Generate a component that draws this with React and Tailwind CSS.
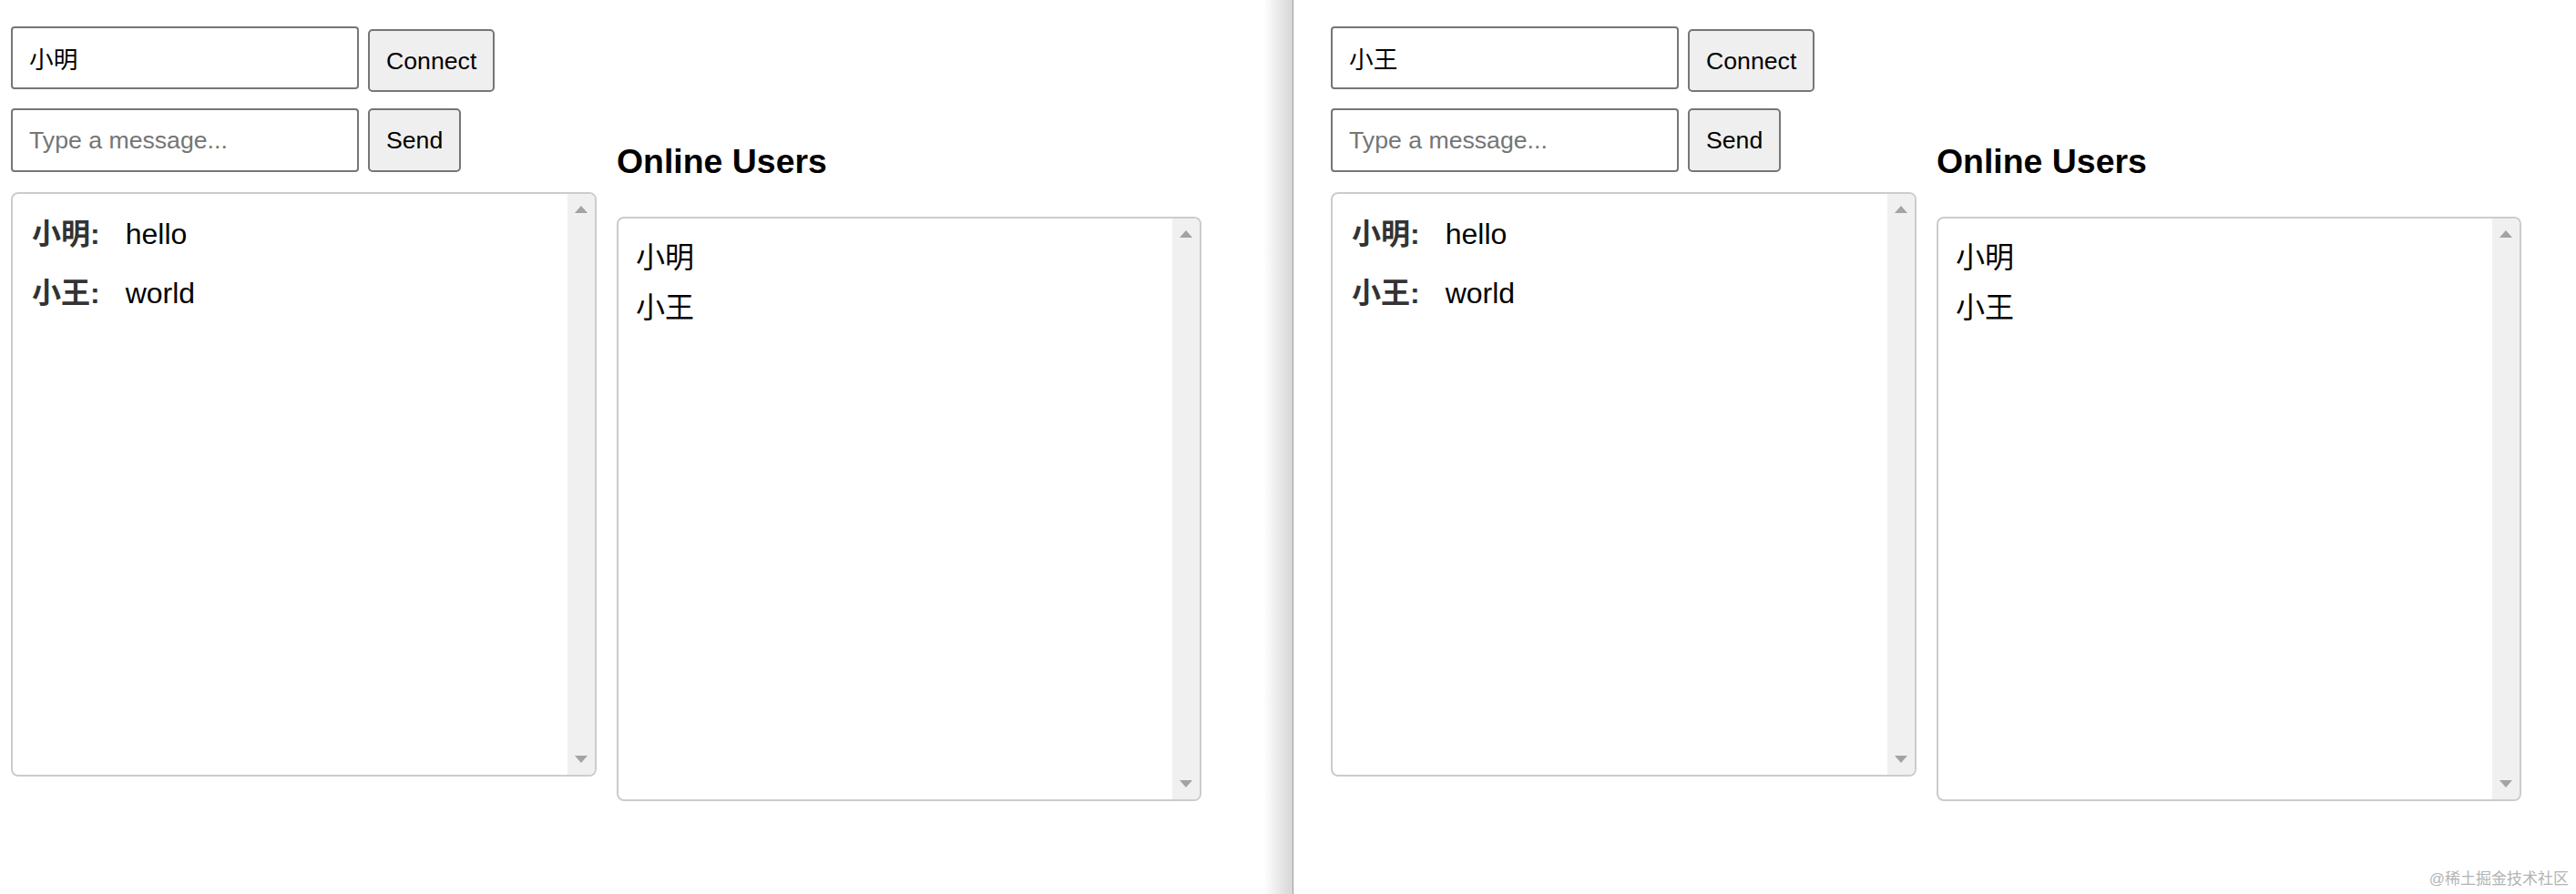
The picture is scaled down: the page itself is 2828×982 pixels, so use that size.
import React from "react";

function Scrollbar() {
  return (
    <div className="w-[30px] shrink-0 bg-[#f0f0f0] flex flex-col items-center justify-between py-[13px]">
      <svg width="14" height="8" viewBox="0 0 14 8">
        <polygon points="0,8 7,0 14,8" fill="#a3a3a3" />
      </svg>
      <svg width="14" height="8" viewBox="0 0 14 8">
        <polygon points="0,0 14,0 7,8" fill="#a3a3a3" />
      </svg>
    </div>
  );
}

function ChatWindow({ name }) {
  const messages = [
    { user: "小明", text: "hello" },
    { user: "小王", text: "world" },
  ];
  const users = ["小明", "小王"];
  return (
    <div className="flex gap-[22px]">
      <div className="w-[643px] flex flex-col">
        <div className="flex items-start gap-[10px] mt-[29px]">
          <input
            value={name}
            readOnly
            className="w-[382px] h-[69px] border-2 border-[#767676] rounded-[4px] px-[18px] text-[26.67px] text-black bg-white outline-none"
          />
          <button className="mt-[3px] h-[69px] px-[18px] bg-[#efefef] border-2 border-[#767676] rounded-[5px] text-[26.67px] text-black">
            Connect
          </button>
        </div>
        <div className="flex items-start gap-[10px] mt-[18px]">
          <input
            placeholder="Type a message..."
            readOnly
            className="w-[382px] h-[70px] border-2 border-[#767676] rounded-[4px] px-[18px] text-[26.67px] text-black bg-white placeholder:text-[#757575] outline-none"
          />
          <button className="h-[70px] px-[18px] bg-[#efefef] border-2 border-[#767676] rounded-[5px] text-[26.67px] text-black">
            Send
          </button>
        </div>
        <div className="mt-[22px] h-[642px] border-2 border-[#cccccc] rounded-[8px] overflow-hidden flex">
          <div className="flex-1 pt-[12px] px-[21px] text-[32px]">
            {messages.map((m, i) => (
              <div key={i} className="h-[65px] leading-[65px] flex">
                <span className="font-bold text-[#333333]">{m.user}:</span>
                <span className="ml-[28px] text-black">{m.text}</span>
              </div>
            ))}
          </div>
          <Scrollbar />
        </div>
      </div>
      <div className="w-[642px] flex flex-col pt-[156px]">
        <h3 className="text-[37.44px] leading-[43px] font-bold text-black">Online Users</h3>
        <div className="mt-[39px] h-[642px] border-2 border-[#cccccc] rounded-[8px] overflow-hidden flex">
          <div className="flex-1 pt-[16px] px-[19px] text-[32px] text-black">
            {users.map((u, i) => (
              <div key={i} className="h-[55px] leading-[55px]">
                {u}
              </div>
            ))}
          </div>
          <Scrollbar />
        </div>
      </div>
    </div>
  );
}

export default function App() {
  return (
    <div className="relative flex w-[2828px] h-[982px] bg-white overflow-hidden font-['Liberation_Sans','Noto_Sans_CJK_SC',sans-serif]">
      <div className="w-[1387px] shrink-0 pl-[12px]">
        <ChatWindow name="小明" />
      </div>
      <div className="w-[33px] shrink-0 bg-gradient-to-r from-white to-[#d6d6d6] border-r border-[#a0a0a0]" />
      <div className="flex-1 pl-[41px]">
        <ChatWindow name="小王" />
      </div>
      <div className="absolute right-[8px] bottom-[4px] text-[17px] leading-[24px] text-[#b3b3b3]">
        @稀土掘金技术社区
      </div>
    </div>
  );
}
